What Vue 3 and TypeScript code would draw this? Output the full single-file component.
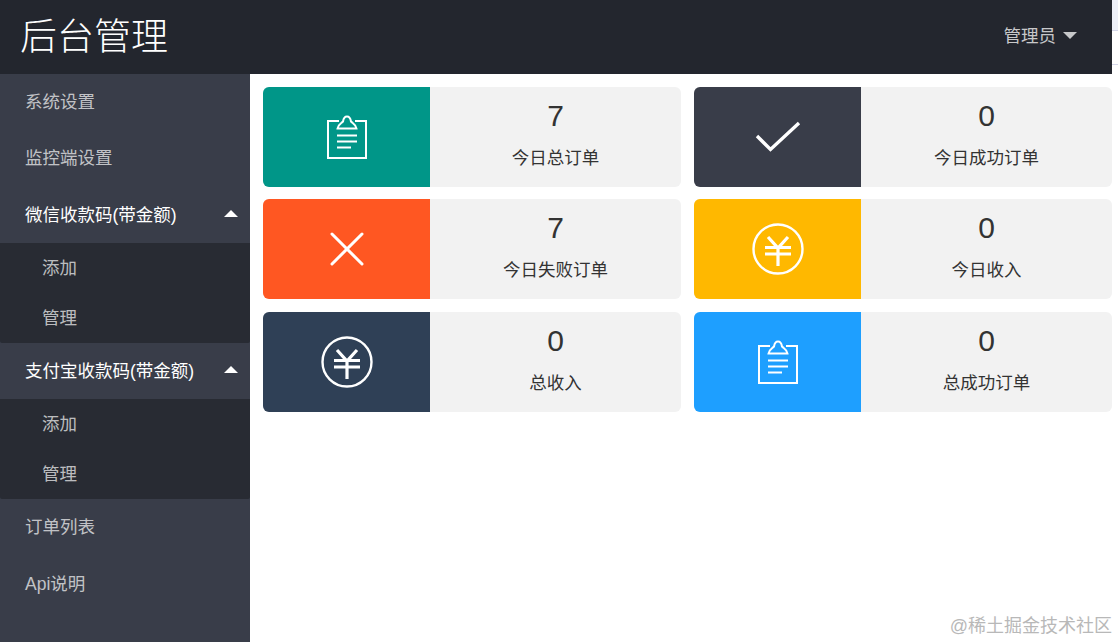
<script setup lang="ts">
type IconName = 'clipboard' | 'check' | 'close' | 'yen'

interface NavItem {
  label: string
  children?: string[]
}

interface StatCard {
  icon: IconName
  color: string
  value: number
  label: string
}

const navItems: NavItem[] = [
  { label: '系统设置' },
  { label: '监控端设置' },
  { label: '微信收款码(带金额)', children: ['添加', '管理'] },
  { label: '支付宝收款码(带金额)', children: ['添加', '管理'] },
  { label: '订单列表' },
  { label: 'Api说明' }
]

const cards: StatCard[] = [
  { icon: 'clipboard', color: '#009688', value: 7, label: '今日总订单' },
  { icon: 'check', color: '#393d49', value: 0, label: '今日成功订单' },
  { icon: 'close', color: '#ff5722', value: 7, label: '今日失败订单' },
  { icon: 'yen', color: '#ffb800', value: 0, label: '今日收入' },
  { icon: 'yen', color: '#2f4056', value: 0, label: '总收入' },
  { icon: 'clipboard', color: '#1e9fff', value: 0, label: '总成功订单' }
]
</script>

<template>
  <div class="layout">
    <div class="top">
      <header class="topbar">
        <div class="logo">后台管理</div>
        <div class="user">管理员<span class="caret-down"></span></div>
      </header>
      <div class="edge"></div>
    </div>
    <div class="body">
      <aside class="side">
        <template v-for="item in navItems" :key="item.label">
          <div :class="['nav-row', { open: item.children }]">
            <span>{{ item.label }}</span>
            <span v-if="item.children" class="caret-up"></span>
          </div>
          <div v-if="item.children" class="nav-child">
            <div v-for="child in item.children" :key="child" class="child-row">{{ child }}</div>
          </div>
        </template>
      </aside>
      <main class="main">
        <div class="cards">
          <div v-for="card in cards" :key="card.label" class="card">
            <div class="card-icon" :style="{ background: card.color }">
              <!-- 剪贴板 -->
              <svg v-if="card.icon === 'clipboard'" width="42" height="44" viewBox="0 0 42 44" fill="none" stroke="#fff" stroke-width="2">
                <path d="M13 6H2V43H40V6H29" />
                <path d="M11.500 13.500C12 9.500 15 8.500 17 6.500C17.500 3.500 19 1.500 21 1.500C23 1.500 24.500 3.500 25 6.500C27 8.500 30 9.500 30.500 13.500Z" />
                <path d="M11 20.500H31M11 26.500H31M11 32.500H25" />
              </svg>
              <!-- 对勾 -->
              <svg v-else-if="card.icon === 'check'" width="46" height="32" viewBox="0 0 46 32" fill="none" stroke="#fff" stroke-width="3.400">
                <path d="M2 15L15.500 28.500L44 2" />
              </svg>
              <!-- 叉 -->
              <svg v-else-if="card.icon === 'close'" width="34" height="34" viewBox="0 0 34 34" fill="none" stroke="#fff" stroke-width="3" stroke-linecap="round">
                <path d="M2 2L32 32M32 2L2 32" />
              </svg>
              <!-- 人民币 -->
              <svg v-else width="52" height="52" viewBox="0 0 52 52" fill="none" stroke="#fff">
                <circle cx="26" cy="26" r="24.500" stroke-width="2.400" />
                <path d="M16 14L26 25L36 14M13 24.500H39M13 31H39M26 25V43" stroke-width="3.200" />
              </svg>
            </div>
            <div class="card-text">
              <div class="card-value">{{ card.value }}</div>
              <div class="card-label">{{ card.label }}</div>
            </div>
          </div>
        </div>
        <div class="watermark">@稀土掘金技术社区</div>
      </main>
    </div>
  </div>
</template>

<style>
html, body {
  margin: 0;
  background: #fff;
}
</style>

<style scoped>
.layout {
  width: 1118px;
  height: 642px;
  display: flex;
  flex-direction: column;
  overflow: hidden;
  font-family: "Liberation Sans", "Noto Sans CJK SC", sans-serif;
  font-size: 17.500px;
  color: #333;
}

.top {
  display: flex;
  height: 74px;
  flex-shrink: 0;
}

.topbar {
  flex: 1;
  display: flex;
  align-items: center;
  justify-content: space-between;
  padding-bottom: 6px;
  box-sizing: border-box;
  background: #23262e;
  color: #fff;
}

/* 截图右上角露出的一条浅色边 */
.edge {
  width: 6px;
  height: 65px;
  box-sizing: border-box;
  border-bottom: 1px solid #d6d8ea;
  background: linear-gradient(#eef0f8 30px, #d6d8ea 30px, #d6d8ea 31px, #fff 31px);
}

.logo {
  padding-left: 20px;
  font-size: 37px;
  font-weight: 300;
}

.user {
  display: flex;
  align-items: center;
  padding-right: 35px;
  color: rgba(255, 255, 255, 0.75);
}

.caret-down {
  margin-left: 7px;
  margin-top: 3px;
  border: 7px solid transparent;
  border-bottom: 0;
  border-top-color: rgba(255, 255, 255, 0.75);
}

.body {
  flex: 1;
  display: flex;
  min-height: 0;
}

.side {
  width: 250px;
  flex-shrink: 0;
  background: #393d49;
}

.nav-row {
  height: 56.330px;
  box-sizing: border-box;
  display: flex;
  align-items: center;
  justify-content: space-between;
  padding: 0 12px 3px 25px;
  color: rgba(255, 255, 255, 0.7);
}

.nav-row.open {
  color: #fff;
}

.caret-up {
  border: 7px solid transparent;
  border-top: 0;
  border-bottom-color: #fff;
}

.nav-child {
  background: #282b33;
  border-radius: 0 0 2px 2px;
}

.child-row {
  height: 50px;
  box-sizing: border-box;
  display: flex;
  align-items: center;
  padding: 0 0 3px 42px;
  color: rgba(255, 255, 255, 0.7);
}

.main {
  flex: 1;
  position: relative;
  padding: 13px 6px 0 13px;
}

.cards {
  display: grid;
  grid-template-columns: 418px 418px;
  grid-auto-rows: 100px;
  column-gap: 13px;
  row-gap: 12.400px;
}

.card {
  display: flex;
  border-radius: 6px;
  overflow: hidden;
  background: #f2f2f2;
}

.card-icon {
  width: 167px;
  display: flex;
  align-items: center;
  justify-content: center;
}

.card-text {
  flex: 1;
  display: flex;
  flex-direction: column;
  align-items: center;
}

.card-value {
  margin-top: 11px;
  font-size: 30px;
  line-height: 36px;
}

.card-label {
  margin-top: 11px;
  line-height: 26px;
}

.watermark {
  position: absolute;
  right: 6px;
  bottom: 5px;
  font-size: 18px;
  color: #b8b8b8;
}
</style>
